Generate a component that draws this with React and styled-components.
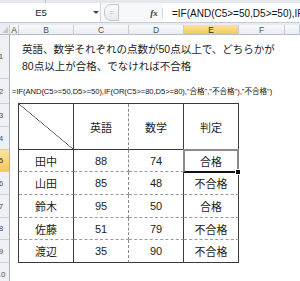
import React from 'react';
import styled, { createGlobalStyle, css } from 'styled-components';

const GlobalStyle = createGlobalStyle`
    html, body {
        margin: 0;
        padding: 0;
        background: #ffffff;
        overflow: hidden;
    }
    body {
        font-family: "Liberation Sans", "Noto Sans CJK JP", sans-serif;
        color: #1a1a1a;
    }
`;

const Window = styled.div`
    width: 300px;
    height: 281px;
    overflow: hidden;
    background: #ffffff;
`;

const TopStrip = styled.div`
    height: 3px;
    background: #e4e8ed;
    display: flex;
`;

const StripPart = styled.div`
    width: 45px;
    border-right: 1px solid #b9c0c9;
`;

const FormulaRow = styled.div`
    height: 19px;
    display: flex;
    align-items: stretch;
    background: #f7f8fa;
    border-bottom: 1px solid #c6ccd4;
`;

const NameBox = styled.div`
    width: 100px;
    display: flex;
    align-items: center;
    background: #ffffff;
    border-right: 1px solid #d0d5dc;
    font-size: 9.5px;
    color: #222;
`;

const NameText = styled.span`
    width: 82px;
    text-align: center;
`;

const DropArrow = styled.span`
    width: 0;
    height: 0;
    margin-left: 11px;
    border-left: 3px solid transparent;
    border-right: 3px solid transparent;
    border-top: 3px solid #444;
`;

const Splitter = styled.div`
    width: 62px;
    display: flex;
    align-items: center;
    padding-left: 3px;
    box-sizing: border-box;
`;

const Pill = styled.div`
    width: 13px;
    height: 15px;
    border-radius: 7px 0 0 7px;
    border: 1px solid #c3c8cf;
    background: linear-gradient(#fbfcfd, #e6e9ed);
    display: flex;
    align-items: center;
    justify-content: center;
    font-size: 7px;
    color: #b5bac1;
`;

const FxButton = styled.div`
    width: 14px;
    display: flex;
    align-items: center;
    justify-content: center;
    margin-left: auto;
    font-family: "Liberation Serif", serif;
    font-style: italic;
    font-weight: bold;
    font-size: 9px;
    color: #3a3a3a;
    border-right: 1px solid #d0d5dc;
    padding-right: 1px;
`;

const FormulaInput = styled.div`
    flex: 1;
    background: #ffffff;
    display: flex;
    align-items: center;
    padding-left: 9px;
    font-size: 10px;
    white-space: nowrap;
    overflow: hidden;
    color: #111;
`;

const Gap = styled.div`
    height: 2px;
    background: #e7eaee;
`;

const Sheet = styled.div`
    display: grid;
    grid-template-columns: 10px 9px 55px 55px 55px 55px 46px 15px;
    grid-template-rows: 10px 44px 25px 23px 23px 22px 23px 23px 22px 23px 23px;
`;

const headerActive = css`
    background: linear-gradient(#fbe3a0, #f4c95c);
    color: #333;
`;

const ColHead = styled.div`
    grid-row: 1;
    display: flex;
    align-items: center;
    justify-content: center;
    font-size: 8.5px;
    color: #4a4f57;
    background: linear-gradient(#f8f9fb, #e9ecf0);
    border-right: 1px solid #c5cbd3;
    border-bottom: 1px solid #b5bcc6;
    box-sizing: border-box;
    ${props => props.active && headerActive}
`;

const Corner = styled(ColHead)`
    position: relative;
    background: #e9ecf0;
    &::after {
        content: '';
        position: absolute;
        right: 1px;
        bottom: 1px;
        border-left: 6px solid transparent;
        border-bottom: 6px solid #c3c8cf;
    }
`;

const RowHead = styled.div`
    grid-column: 1;
    grid-row: ${props => props.row};
    display: flex;
    align-items: center;
    overflow: hidden;
    font-size: 8px;
    color: #4a4f57;
    background: #eef0f4;
    border-right: 1px solid #a9b1bc;
    border-bottom: 1px solid #c9ced6;
    box-sizing: border-box;
    ${props => props.active && headerActive}
`;

const RowLabel = styled.span`
    flex: none;
    width: 20px;
    margin-left: -9px;
    text-align: center;
`;

const TextBox = styled.div`
    grid-column: 3 / -1;
    grid-row: 2;
    padding: 6px 0 0 3px;
    font-size: 10.5px;
    line-height: 17px;
    white-space: nowrap;
    color: #1c1c1c;
`;

const FormulaNote = styled.div`
    grid-column: 2 / -1;
    grid-row: 3;
    display: flex;
    align-items: center;
    padding: 0 0 2px 2px;
    font-size: 7.6px;
    letter-spacing: -0.05px;
    white-space: nowrap;
    overflow: hidden;
    color: #111;
`;

const Table = styled.div`
    grid-column: 3 / 7;
    grid-row: 4 / 11;
    display: grid;
    grid-template-columns: 55px 55px 55px 55px;
    grid-template-rows: 46px 22px 23px 23px 22px 23px;
    border-left: 1px solid #3a3a3a;
    border-top: 1px solid #3a3a3a;
    margin-left: -1px;
    margin-top: -1px;
    align-self: start;
`;

const Cell = styled.div`
    position: relative;
    display: flex;
    align-items: center;
    justify-content: center;
    font-size: 11px;
    color: #1c1c1c;
    box-sizing: border-box;
    border-right: 1px ${props => props.dashRight ? 'dashed #8a8a8a' : 'solid #3a3a3a'};
    border-bottom: 1px ${props => props.dashBottom ? 'dashed #9a9a9a' : 'solid #3a3a3a'};
    ${props => props.diagonal && css`
        background: linear-gradient(to top right, transparent calc(50% - 0.6px), #3a3a3a 50%, transparent calc(50% + 0.6px));
    `}
    ${props => props.selected && css`
        &::after {
            content: '';
            position: absolute;
            left: -1px;
            top: -1px;
            right: -1px;
            bottom: -2px;
            border: 2px solid #8a8a8a;
            border-bottom-color: #111;
        }
        &::before {
            content: '';
            position: absolute;
            right: -3px;
            bottom: -4px;
            width: 4px;
            height: 4px;
            background: #111;
            border: 1px solid #fff;
            z-index: 1;
        }
    `}
`;

const columns = ['A', 'B', 'C', 'D', 'E', 'F', ''];

const rows = [
    { name: '田中', en: 88, math: 74, result: '合格' },
    { name: '山田', en: 85, math: 48, result: '不合格' },
    { name: '鈴木', en: 95, math: 50, result: '合格' },
    { name: '佐藤', en: 51, math: 79, result: '不合格' },
    { name: '渡辺', en: 35, math: 90, result: '不合格' },
];

const formula = '=IF(AND(C5>=50,D5>=50),IF(OR(C5>=80,D5>=80),"合格","不合格"),"不合格")';

const App = () => (
    <Window>
        <GlobalStyle />
        <TopStrip>
            <StripPart />
        </TopStrip>
        <FormulaRow>
            <NameBox>
                <NameText>E5</NameText>
                <DropArrow />
            </NameBox>
            <Splitter>
                <Pill>=</Pill>
                <FxButton>fx</FxButton>
            </Splitter>
            <FormulaInput>{formula}</FormulaInput>
        </FormulaRow>
        <Gap />
        <Sheet>
            <Corner />
            {columns.map(c => (
                <ColHead key={c || 'G'} active={c === 'E'}>{c}</ColHead>
            ))}
            {Array.from({ length: 10 }, (_, i) => (
                <RowHead key={i} row={i + 2} active={i === 4}>
                    <RowLabel>{i + 1}</RowLabel>
                </RowHead>
            ))}
            <TextBox>
                <div>英語、数学それぞれの点数が50点以上で、どちらかが</div>
                <div>80点以上が合格、でなければ不合格</div>
            </TextBox>
            <FormulaNote>{formula}</FormulaNote>
            <Table>
                <Cell diagonal />
                <Cell dashRight>英語</Cell>
                <Cell>数学</Cell>
                <Cell>判定</Cell>
                {rows.map((r, i) => {
                    const last = i === rows.length - 1;
                    return (
                        <React.Fragment key={r.name}>
                            <Cell dashBottom={!last}>{r.name}</Cell>
                            <Cell dashBottom={!last} dashRight>{r.en}</Cell>
                            <Cell dashBottom={!last}>{r.math}</Cell>
                            <Cell dashBottom={!last} selected={i === 0}>{r.result}</Cell>
                        </React.Fragment>
                    );
                })}
            </Table>
        </Sheet>
    </Window>
);

export default App;
